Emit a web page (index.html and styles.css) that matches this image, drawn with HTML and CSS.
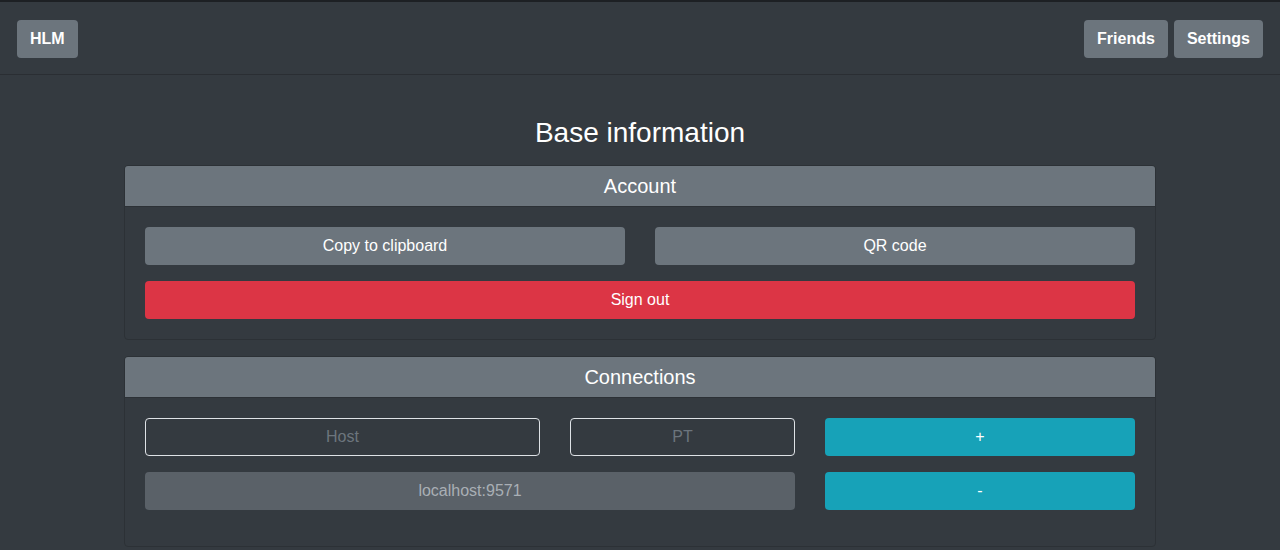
FILE: index.html
```html
<!DOCTYPE html>
<html lang="en">
<head>
<meta charset="utf-8">
<title>HLM</title>
<link rel="stylesheet" href="styles.css">
</head>
<body>
<div class="topline"></div>
<nav class="navbar">
  <button class="btn btn-nav">HLM</button>
  <div class="nav-right">
    <button class="btn btn-nav">Friends</button>
    <button class="btn btn-nav">Settings</button>
  </div>
</nav>
<main class="container">
  <h3 class="title">Base information</h3>
  <section class="card">
    <div class="card-header">Account</div>
    <div class="card-body">
      <div class="row">
        <button class="btn btn-secondary span-6">Copy to clipboard</button>
        <button class="btn btn-secondary span-6">QR code</button>
      </div>
      <div class="row">
        <button class="btn btn-danger span-12">Sign out</button>
      </div>
    </div>
  </section>
  <section class="card">
    <div class="card-header">Connections</div>
    <div class="card-body card-body-loose">
      <div class="row">
        <input class="field span-5" placeholder="Host">
        <input class="field span-3" placeholder="PT">
        <button class="btn btn-info span-4">+</button>
      </div>
      <div class="row">
        <div class="field-disabled span-8">localhost:9571</div>
        <button class="btn btn-info span-4">-</button>
      </div>
    </div>
  </section>
</main>
</body>
</html>
```
FILE: styles.css
```css
* { box-sizing: border-box; }
html, body { margin: 0; padding: 0; }
body {
  background: #343a40;
  color: #fff;
  font-family: "Liberation Sans", Arial, sans-serif;
  font-size: 16px;
  line-height: 1.5;
  height: 550px;
  overflow: hidden;
}
.topline { height: 2px; background: #1d2024; }
.navbar {
  height: 73px;
  display: flex;
  align-items: center;
  justify-content: space-between;
  padding: 2px 17px 0 17px;
  border-bottom: 1px solid #2a2e33;
}
.nav-right { display: flex; gap: 6px; }
.btn {
  font-family: inherit;
  font-size: 16px;
  line-height: 24px;
  color: #fff;
  border: 1px solid transparent;
  border-radius: 4px;
  padding: 6px 12px;
  height: 38px;
  cursor: pointer;
}
.btn-nav { background: #6c757d; font-weight: bold; }
.btn-secondary { background: #6c757d; }
.btn-danger { background: #dc3545; }
.btn-info { background: #17a2b8; }
.container { width: 1032px; margin: 0 auto; padding-top: 41px; }
.title {
  margin: 0 0 15px;
  text-align: center;
  font-size: 28px;
  font-weight: normal;
  line-height: 1.2;
}
.card {
  border: 1px solid #2c3136;
  border-radius: 4px;
  margin-bottom: 16px;
  overflow: hidden;
}
.card-header {
  background: #6c757d;
  height: 41px;
  line-height: 40px;
  text-align: center;
  font-size: 20px;
  border-bottom: 1px solid #2c3136;
}
.card-body { padding: 20px 20px 4px; }
.card-body-loose { padding-bottom: 20px; }
.row {
  display: grid;
  grid-template-columns: repeat(12, 1fr);
  column-gap: 30px;
  margin-bottom: 16px;
}
.span-3 { grid-column: span 3; }
.span-4 { grid-column: span 4; }
.span-5 { grid-column: span 5; }
.span-6 { grid-column: span 6; }
.span-8 { grid-column: span 8; }
.span-12 { grid-column: span 12; }
.field {
  height: 38px;
  background: transparent;
  border: 1px solid #dee2e6;
  border-radius: 4px;
  color: #fff;
  font-family: inherit;
  font-size: 16px;
  text-align: center;
  padding: 6px 12px;
}
.field::placeholder { color: #6c757d; }
.field-disabled {
  height: 38px;
  background: #5a6168;
  border-radius: 4px;
  color: #a9afb5;
  text-align: center;
  line-height: 38px;
}
```
